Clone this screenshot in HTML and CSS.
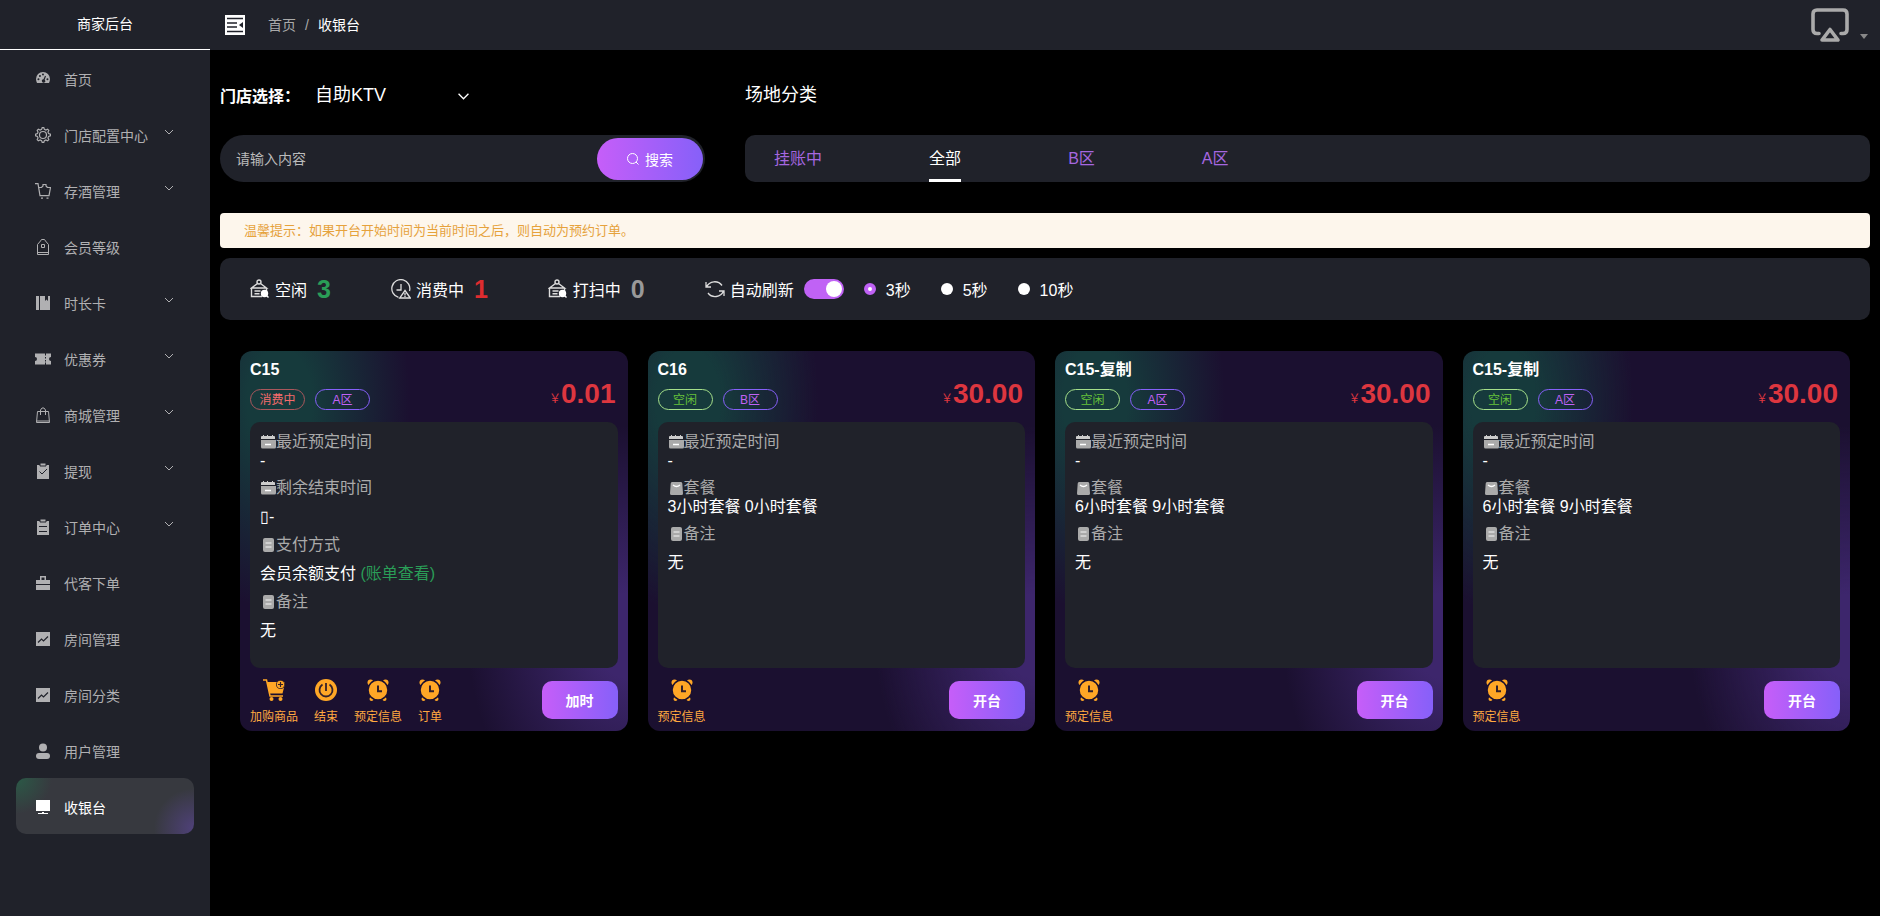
FILE: index.html
```html
<!DOCTYPE html>
<html lang="zh-CN">
	<head>
		<title>收银台</title>
		<meta charset="utf-8">
		<meta name="viewport" content="width=device-width, initial-scale=1">
		<link rel="stylesheet" href="styles.css">
	</head>
	<body>
		<svg class="sprite" aria-hidden="true">
			<symbol id="i-down" viewBox="0 0 10 6"><path d="M1 1l4 4 4-4" fill="none" stroke="currentColor"/></symbol>
			<symbol id="i-dash" viewBox="0 0 16 16"><path fill="currentColor" fill-rule="evenodd" d="M8 1a7 7 0 0 0-7 7c0 1.500.4 2.800 1 4h12c.6-1.200 1-2.500 1-4a7 7 0 0 0-7-7zM3.500 7.200a1 1 0 1 1-.1 2 1 1 0 0 1 .1-2zM5 4a1 1 0 1 1-.1 2A1 1 0 0 1 5 4zm3-1.600a1 1 0 1 1-.1 2 1 1 0 0 1 .1-2zm2 2.400 1 .4-1.300 3.500a1.700 1.700 0 1 1-1.200-.4zm2.500 2.400a1 1 0 1 1-.1 2 1 1 0 0 1 .1-2z"/></symbol>
			<symbol id="i-gear" viewBox="0 0 16 16"><g fill="none" stroke="currentColor" stroke-width="1.200"><path d="M6.600 2.400 7.200.6h1.600l.6 1.800 1.500.6 1.700-.8 1.200 1.200-.8 1.700.6 1.500 1.800.6v1.600l-1.800.6-.6 1.500.8 1.700-1.200 1.200-1.700-.8-1.500.6-.6 1.800H7.200l-.6-1.800-1.500-.6-1.700.8-1.200-1.200.8-1.700-.6-1.500-1.800-.6V7.200l1.800-.6L3 5.100l-.8-1.700 1.200-1.200 1.700.8z"/><circle cx="8" cy="8" r="3.500"/></g></symbol>
			<symbol id="i-cart" viewBox="0 0 16 16"><path d="M0 .7h3l2 12h9l1.500-8.200H12M3.600 4.500H6.500L8 3V1.500h3V3l1.500 1.500M6 15.200h2M11.500 15.200h2" fill="none" stroke="currentColor" stroke-width="1.200"/></symbol>
			<symbol id="i-lock" viewBox="0 0 16 16"><path d="M2.500 15.500v-10L5.500 2l1-1.500h3l1 1.500 3 3.500v10zM2.500 13.500h11M6.500 5.500h3v3h-3z" fill="none" stroke="currentColor"/></symbol>
			<symbol id="i-book" viewBox="0 0 16 16"><path d="M1 1h3v14H1zM5 1h5v5l1.500-1.500L13 6V1h2v14H5z" fill="currentColor"/></symbol>
			<symbol id="i-ticket" viewBox="0 0 16 16"><path d="M0 2.500h10v2h1v-2h5V6a2 2 0 0 0 0 4v3.500h-5v-2h-1v2H0V10a2 2 0 0 0 0-4zM10 6v1.500h1V6zm0 3v1.500h1V9z" fill="currentColor" fill-rule="evenodd"/></symbol>
			<symbol id="i-bag" viewBox="0 0 16 16"><path d="M2.500 4.500h11l1 11h-13zM1.500 14h13M5.500 8V3L7 1h2l1.500 2v5" fill="none" stroke="currentColor"/></symbol>
			<symbol id="i-check" viewBox="0 0 16 16"><path d="M2 2h12v14H2z" fill="currentColor"/><path d="M5 0h6v3H5z" fill="currentColor" stroke="#20222a"/><path d="M4.500 8.500 7 11l5-5" fill="none" stroke="#20222a"/></symbol>
			<symbol id="i-list" viewBox="0 0 16 16"><path d="M2 2h12v14H2z" fill="currentColor"/><path d="M5 0h6v3H5z" fill="currentColor" stroke="#20222a"/><path d="M4 7.500h8M4 12.500h8" stroke="#20222a"/></symbol>
			<symbol id="i-case" viewBox="0 0 16 16"><path d="M1 5h4V1h6v4h4v4H1zM6.500 2.500V5h3V2.500zM1 10h14v5H1z" fill="currentColor" fill-rule="evenodd"/></symbol>
			<symbol id="i-chart" viewBox="0 0 16 16"><path d="M1 1h14v14H1z" fill="currentColor"/><path d="M3 11.500 6.500 8l2 2L13 5.500" fill="none" stroke="#20222a" stroke-width="1.200"/></symbol>
			<symbol id="i-user" viewBox="0 0 16 16"><circle cx="8" cy="4.500" r="4" fill="currentColor"/><rect x="1" y="10" width="14" height="6" rx="3" fill="currentColor"/></symbol>
			<symbol id="i-screen" viewBox="0 0 16 16"><path d="M1 1h14v11H1zM7 13h2v1h4v1H3v-1h4z" fill="currentColor"/></symbol>
			<symbol id="i-room" viewBox="0 0 20 20"><g fill="none" stroke="#ddd" stroke-width="1.400"><circle cx="9" cy="3" r="2"/><path d="M7.500 4.500 1.500 9h15l-6-4.500M1.500 9v8.500H12M16.500 9v3M4.500 12h6M4.500 14.800h5"/></g><circle cx="14.500" cy="14.500" r="3.700" fill="#fff"/><path d="m16 16 2.500 2.500" stroke="#fff" stroke-width="1.400"/></symbol>
			<symbol id="i-clock" viewBox="0 0 20 20"><g fill="none" stroke="#ddd" stroke-width="1.300"><path d="M7.500 18.300A9 9 0 1 1 18.500 12M10 5v6H5.500"/><path d="M14 11.500 19.300 19H8.700z"/><path d="M14 14v2.500M14 17v1"/></g></symbol>
			<symbol id="i-refresh" viewBox="0 0 20 20"><path d="M1 3v5h5M1.500 8A9 9 0 0 1 17 6.500M19 17v-5h-5M18.500 12A9 9 0 0 1 3 14" fill="none" stroke="#ddd" stroke-width="1.300"/></symbol>
			<symbol id="i-date" viewBox="0 0 16 16"><path d="M1 5V3q0-1 1-1h12q1 0 1 1v2zM3 1h1v2H3zM7 1h1v2H7zM12 1h1v2h-1z" fill="#ccc"/><path d="M1 6h15v7q0 1.500-1.500 1.500h-12Q1 14.500 1 13z" fill="#aaa"/><path d="M5 10.500h6" stroke="#fff" stroke-width="1.500"/></symbol>
			<symbol id="i-note" viewBox="0 0 16 16"><rect x="3" y="1" width="11" height="14" rx="2" fill="#aaa"/><path d="M5.500 6h6M5.500 10h6" stroke="#ddd" stroke-width="1.500"/></symbol>
			<symbol id="i-pack" viewBox="0 0 16 16"><path d="M4 2h9q1.200 0 1.300 1.500l.7 10q0 1.500-1.500 1.500h-10Q2 15 2 13.500l.7-10Q2.800 2 4 2z" fill="#aaa"/><path d="M5 5q3.500 3 7 0" fill="none" stroke="#fff" stroke-width="1.300"/></symbol>
			<symbol id="i-alarm" viewBox="0 0 22 22"><g fill="#ffa726"><circle cx="3.500" cy="3.500" r="3"/><circle cx="18.500" cy="3.500" r="3"/><circle cx="4.500" cy="20" r="2"/><circle cx="17.500" cy="20" r="2"/><circle cx="11" cy="11" r="10" stroke="#1b1030" stroke-width="1.500"/></g><path d="M11 6.500v5.700h4" fill="none" stroke="#33202a" stroke-width="2"/></symbol>
			<symbol id="i-power" viewBox="0 0 22 22"><circle cx="11" cy="11" r="11" fill="#ffa726"/><path d="M7.500 5.500a6.500 6.500 0 1 0 7 0M11 4v8" fill="none" stroke="#33202a" stroke-width="1.800"/></symbol>
			<symbol id="i-buy" viewBox="0 0 22 22"><path d="M4 3 6.500 14.500h13l2-8V3z" fill="#ffa726"/><path d="M0 1h3.500L7 17h13" fill="none" stroke="#ffa726" stroke-width="1.500"/><circle cx="8.500" cy="20" r="2" fill="#ffa726"/><circle cx="17.500" cy="20" r="2" fill="#ffa726"/><circle cx="17.500" cy="5.500" r="4.500" fill="#33202a"/><circle cx="17.500" cy="5.500" r="3.700" fill="#ffa726"/><path d="M17.500 3v5M15 5.500h5" stroke="#33202a" stroke-width="1.200"/></symbol>
		</svg>

		<aside class="sidebar">
			<div class="logo">商家后台</div>
			<nav class="menu">
				<a href="#"><svg class="ico"><use href="#i-dash"/></svg>首页</a>
				<a href="#"><svg class="ico"><use href="#i-gear"/></svg>门店配置中心<svg class="arrow"><use href="#i-down"/></svg></a>
				<a href="#"><svg class="ico"><use href="#i-cart"/></svg>存酒管理<svg class="arrow"><use href="#i-down"/></svg></a>
				<a href="#"><svg class="ico"><use href="#i-lock"/></svg>会员等级</a>
				<a href="#"><svg class="ico"><use href="#i-book"/></svg>时长卡<svg class="arrow"><use href="#i-down"/></svg></a>
				<a href="#"><svg class="ico"><use href="#i-ticket"/></svg>优惠券<svg class="arrow"><use href="#i-down"/></svg></a>
				<a href="#"><svg class="ico"><use href="#i-bag"/></svg>商城管理<svg class="arrow"><use href="#i-down"/></svg></a>
				<a href="#"><svg class="ico"><use href="#i-check"/></svg>提现<svg class="arrow"><use href="#i-down"/></svg></a>
				<a href="#"><svg class="ico"><use href="#i-list"/></svg>订单中心<svg class="arrow"><use href="#i-down"/></svg></a>
				<a href="#"><svg class="ico"><use href="#i-case"/></svg>代客下单</a>
				<a href="#"><svg class="ico"><use href="#i-chart"/></svg>房间管理</a>
				<a href="#"><svg class="ico"><use href="#i-chart"/></svg>房间分类</a>
				<a href="#"><svg class="ico"><use href="#i-user"/></svg>用户管理</a>
				<a href="#" class="active"><svg class="ico"><use href="#i-screen"/></svg>收银台</a>
			</nav>
		</aside>

		<div class="page">
			<header class="topbar">
				<button class="fold" aria-label="收起菜单">
					<svg viewBox="0 0 20 20"><path fill="#fff" d="M0 0h20v20H0z"/><path d="M2 3.500h16M2 8h10M2 12h10M2 16.500h16" stroke="#20222a" stroke-width="1.500"/><path d="M18 7v6l-4-3z" fill="#20222a"/></svg>
				</button>
				<nav class="crumbs"><a href="#">首页</a><span>/</span><b>收银台</b></nav>
				<button class="avatar" aria-label="账号">
					<svg class="cast" viewBox="0 0 38 34"><path d="M8 25.500H6q-4 0-4-4V6q0-4 4-4h26q4 0 4 4v15.500q0 4-4 4h-2" fill="none" stroke="#aaa" stroke-width="3.600" stroke-linecap="round"/><path d="M19 21.500 27 32H11z" fill="none" stroke="#aaa" stroke-width="3.600" stroke-linejoin="round"/></svg>
					<svg class="caret" viewBox="0 0 8 5"><path d="M0 0h8L4 5z" fill="#888"/></svg>
				</button>
			</header>

			<main>
				<div class="filters">
					<div>
						<div class="store">
							<label for="store">门店选择：</label>
							<div class="select">
								<select id="store"><option>自助KTV</option></select>
								<svg viewBox="0 0 10 6"><path d="M.5.5 5 5 9.500.5" fill="none" stroke="#fff" stroke-width="1.200"/></svg>
							</div>
						</div>
						<form class="search">
							<input type="text" placeholder="请输入内容" aria-label="搜索内容">
							<button type="button"><svg viewBox="0 0 12 12"><circle cx="5.500" cy="5.500" r="5" fill="none" stroke="#fff"/><path d="m9 9 2.500 2.500" stroke="#fff"/></svg>搜索</button>
						</form>
					</div>
					<div>
						<h2>场地分类</h2>
						<div class="tabs">
							<button>挂账中</button>
							<button class="on">全部</button>
							<button>B区</button>
							<button>A区</button>
						</div>
					</div>
				</div>

				<p class="notice">温馨提示：如果开台开始时间为当前时间之后，则自动为预约订单。</p>

				<div class="tools">
					<div class="stat"><svg><use href="#i-room"/></svg><span>空闲</span><b class="green">3</b></div>
					<div class="stat"><svg><use href="#i-clock"/></svg><span>消费中</span><b class="red">1</b></div>
					<div class="stat"><svg><use href="#i-room"/></svg><span>打扫中</span><b>0</b></div>
					<div class="stat">
						<svg><use href="#i-refresh"/></svg>
						<label for="auto">自动刷新</label>
						<input type="checkbox" id="auto" class="switch" checked>
						<label class="radio"><input type="radio" name="sec" checked>3秒</label>
						<label class="radio"><input type="radio" name="sec">5秒</label>
						<label class="radio"><input type="radio" name="sec">10秒</label>
					</div>
				</div>

				<div class="cards">
					<section class="card">
						<div class="head">
							<div>
								<h3>C15</h3>
								<div class="tags"><span class="tag busy">消费中</span><span class="tag">A区</span></div>
							</div>
							<p class="price"><small>￥</small>0.01</p>
						</div>
						<dl>
							<dt><svg><use href="#i-date"/></svg>最近预定时间</dt>
							<dd>-</dd>
							<dt><svg><use href="#i-date"/></svg>剩余结束时间</dt>
							<dd class="tall">▯-</dd>
							<dt><svg><use href="#i-note"/></svg>支付方式</dt>
							<dd class="tall">会员余额支付 <a href="#">(账单查看)</a></dd>
							<dt><svg><use href="#i-note"/></svg>备注</dt>
							<dd class="tall">无</dd>
						</dl>
						<div class="foot">
							<button class="act"><svg><use href="#i-buy"/></svg>加购商品</button>
							<button class="act"><svg><use href="#i-power"/></svg>结束</button>
							<button class="act"><svg><use href="#i-alarm"/></svg>预定信息</button>
							<button class="act"><svg><use href="#i-alarm"/></svg>订单</button>
							<button class="go">加时</button>
						</div>
					</section>

					<section class="card">
						<div class="head">
							<div>
								<h3>C16</h3>
								<div class="tags"><span class="tag free">空闲</span><span class="tag">B区</span></div>
							</div>
							<p class="price"><small>￥</small>30.00</p>
						</div>
						<dl>
							<dt><svg><use href="#i-date"/></svg>最近预定时间</dt>
							<dd>-</dd>
							<dt><svg><use href="#i-pack"/></svg>套餐</dt>
							<dd>3小时套餐 0小时套餐</dd>
							<dt><svg><use href="#i-note"/></svg>备注</dt>
							<dd class="tall">无</dd>
						</dl>
						<div class="foot">
							<button class="act"><svg><use href="#i-alarm"/></svg>预定信息</button>
							<button class="go">开台</button>
						</div>
					</section>

					<section class="card">
						<div class="head">
							<div>
								<h3>C15-复制</h3>
								<div class="tags"><span class="tag free">空闲</span><span class="tag">A区</span></div>
							</div>
							<p class="price"><small>￥</small>30.00</p>
						</div>
						<dl>
							<dt><svg><use href="#i-date"/></svg>最近预定时间</dt>
							<dd>-</dd>
							<dt><svg><use href="#i-pack"/></svg>套餐</dt>
							<dd>6小时套餐 9小时套餐</dd>
							<dt><svg><use href="#i-note"/></svg>备注</dt>
							<dd class="tall">无</dd>
						</dl>
						<div class="foot">
							<button class="act"><svg><use href="#i-alarm"/></svg>预定信息</button>
							<button class="go">开台</button>
						</div>
					</section>

					<section class="card">
						<div class="head">
							<div>
								<h3>C15-复制</h3>
								<div class="tags"><span class="tag free">空闲</span><span class="tag">A区</span></div>
							</div>
							<p class="price"><small>￥</small>30.00</p>
						</div>
						<dl>
							<dt><svg><use href="#i-date"/></svg>最近预定时间</dt>
							<dd>-</dd>
							<dt><svg><use href="#i-pack"/></svg>套餐</dt>
							<dd>6小时套餐 9小时套餐</dd>
							<dt><svg><use href="#i-note"/></svg>备注</dt>
							<dd class="tall">无</dd>
						</dl>
						<div class="foot">
							<button class="act"><svg><use href="#i-alarm"/></svg>预定信息</button>
							<button class="go">开台</button>
						</div>
					</section>
				</div>
			</main>
		</div>
	</body>
</html>
```
FILE: styles.css
```css
*{
	margin:0;
	padding:0;
	box-sizing:border-box;
}
body{
	display:flex;
	min-height:100vh;
	background:#000;
	color:#fff;
	font:14px "Liberation Sans","Noto Sans CJK SC",sans-serif;
}
button,input,select{
	font-family:inherit;
	color:inherit;
	background:none;
	border:0;
	outline:0;
}
button{
	cursor:pointer;
}
a{
	color:inherit;
	text-decoration:none;
}
.sprite{
	display:none;
}

/* sidebar */
.sidebar{
	width:210px;
	flex-shrink:0;
	background:#20222a;
}
.logo{
	height:50px;
	line-height:48px;
	text-align:center;
	border-bottom:1px solid #fff;
}
.menu{
	padding:0 16px;
}
.menu a{
	display:flex;
	align-items:center;
	height:56px;
	padding:2px 20px 0 19px;
	border-radius:10px;
	color:#b0b0b2;
}
.menu a.active{
	color:#fff;
	background:
		radial-gradient(circle at 0 0,#2b5a47,transparent 36px),
		radial-gradient(circle at 100% 90%,#4f4179,transparent 40px),
		#37393f;
}
.ico{
	width:16px;
	height:16px;
	margin-right:13px;
}
.arrow{
	width:10px;
	height:6px;
	margin:0 0 6px auto;
}

/* top bar */
.page{
	flex:1;
	min-width:0;
}
.topbar{
	display:flex;
	align-items:center;
	height:50px;
	padding:0 12px 0 15px;
	background:#20222a;
}
.fold{
	width:20px;
	height:20px;
	margin-right:23px;
}
.fold svg{
	display:block;
}
.crumbs{
	display:flex;
	gap:9px;
	line-height:48px;
	color:#aaa;
}
.crumbs b{
	font-weight:normal;
	color:#fff;
}
.avatar{
	display:flex;
	align-items:flex-end;
	gap:11px;
	margin-left:auto;
}
.cast{
	width:38px;
	height:34px;
}
.caret{
	width:8px;
	height:5px;
	margin-bottom:3px;
}

main{
	padding:25px 10px;
}
.filters{
	display:grid;
	grid-template-columns:29.4% 1fr;
	gap:40px;
}
.store{
	display:flex;
	align-items:center;
	height:40px;
	margin-bottom:20px;
	font-size:16px;
}
.store label{
	width:81px;
	font-weight:bold;
}
.select{
	position:relative;
	width:170px;
}
.select select{
	width:100%;
	height:40px;
	padding-left:14px;
	font-size:18px;
	appearance:none;
}
.select svg{
	position:absolute;
	right:2px;
	top:18px;
	width:11px;
	height:7px;
}
.search{
	display:flex;
	align-items:center;
	height:47px;
	padding:2px;
	border-radius:24px;
	background:#20222a;
}
.search input{
	flex:1;
	min-width:0;
	padding-left:14px;
	font-size:14px;
}
.search input::placeholder{
	color:#bbb;
}
.search button{
	display:flex;
	align-items:center;
	justify-content:center;
	gap:6px;
	width:106px;
	height:42px;
	border-radius:21px;
	font-size:14px;
	background:linear-gradient(90deg,#c65ef9,#8660f9);
}
.search svg{
	width:12px;
	height:12px;
}
h2{
	height:40px;
	margin-bottom:20px;
	line-height:40px;
	font-size:18px;
	font-weight:normal;
}
.tabs{
	display:flex;
	gap:107px;
	height:47px;
	padding:0 29px;
	border-radius:10px;
	background:#20222a;
}
.tabs button{
	border-bottom:3px solid transparent;
	font-size:16px;
	color:#a667e0;
}
.tabs button.on{
	color:#fff;
	border-bottom-color:#fff;
}
.notice{
	margin:31px 0 10px;
	padding:0 24px;
	border-radius:4px;
	line-height:35px;
	font-size:13px;
	color:#e6a23c;
	background:#fdf6ec;
}

/* status row */
.tools{
	display:flex;
	align-items:center;
	gap:60px;
	height:62px;
	padding:0 30px;
	border-radius:10px;
	background:#20222a;
}
.stat{
	display:flex;
	align-items:center;
	font-size:16px;
}
.stat svg{
	width:20px;
	height:20px;
	margin-right:5px;
}
.stat b{
	margin-left:10px;
	line-height:30px;
	font-size:25px;
	color:#999;
}
.stat b.green{
	color:#2a9d57;
}
.stat b.red{
	color:#dd2c2f;
}
.switch{
	appearance:none;
	width:40px;
	height:20px;
	margin:0 20px 0 10px;
	padding:2px;
	border-radius:10px;
	background:#c062f5;
}
.switch::before{
	content:"";
	display:block;
	width:16px;
	height:16px;
	border-radius:50%;
	background:#fff;
}
.switch:checked::before{
	margin-left:auto;
}
.radio{
	display:flex;
	align-items:center;
	margin-right:30px;
}
.radio input{
	appearance:none;
	width:12px;
	height:12px;
	margin-right:10px;
	border-radius:50%;
	background:#fff;
}
.radio input:checked{
	border:4px solid #c062f5;
}

/* rooms */
.cards{
	display:grid;
	grid-template-columns:repeat(4,1fr);
	gap:20px;
	margin-top:31px;
	padding:0 20px;
}
.card{
	padding:10px 10px 0;
	border-radius:12px;
	background:
		radial-gradient(130px 210px at 40px 50px,#163a3c 25%,transparent),
		radial-gradient(160px 210px at 100% 75%,#3d266c 20%,transparent),
		#1b1030;
}
.head{
	display:flex;
	justify-content:space-between;
	align-items:flex-end;
	margin-bottom:12px;
}
h3{
	margin-bottom:10px;
	line-height:18px;
	font-size:16px;
}
.tags{
	display:flex;
	gap:10px;
}
.tag{
	width:55px;
	height:21px;
	border:1px solid #8660f9;
	border-radius:11px;
	line-height:20px;
	text-align:center;
	font-size:12px;
	color:#c062f5;
}
.tag.busy{
	border-color:#a9575c;
	color:#f56c6c;
}
.tag.free{
	border-color:#a5e08a;
	color:#67c23a;
}
.price{
	display:flex;
	align-items:baseline;
	padding-right:2px;
	line-height:32px;
	font-size:28px;
	font-weight:bold;
	color:#dd363f;
}
.price small{
	line-height:12px;
	font-size:12px;
	font-weight:normal;
}
dl{
	height:246px;
	padding:10px;
	border-radius:10px;
	font-size:16px;
	line-height:19px;
	background:#20222a;
}
dt{
	display:flex;
	align-items:center;
	height:19px;
	color:#aaa;
}
dt svg{
	width:16px;
	height:16px;
}
dd{
	height:19px;
	margin-bottom:8px;
}
dd.tall{
	height:38px;
	margin-bottom:0;
	line-height:40px;
}
dd a{
	color:#2a9d57;
}
.foot{
	display:flex;
	align-items:flex-start;
	gap:16px;
	height:63px;
	padding-top:11px;
}
.act{
	display:flex;
	flex-direction:column;
	align-items:center;
	gap:8px;
	font-size:12px;
	line-height:16px;
	color:#ffa940;
}
.act svg{
	width:22px;
	height:22px;
}
.go{
	width:76px;
	height:38px;
	margin:2px 0 0 auto;
	border-radius:10px;
	font-size:14px;
	font-weight:bold;
	background:linear-gradient(90deg,#c65ef9,#8660f9);
}
```
